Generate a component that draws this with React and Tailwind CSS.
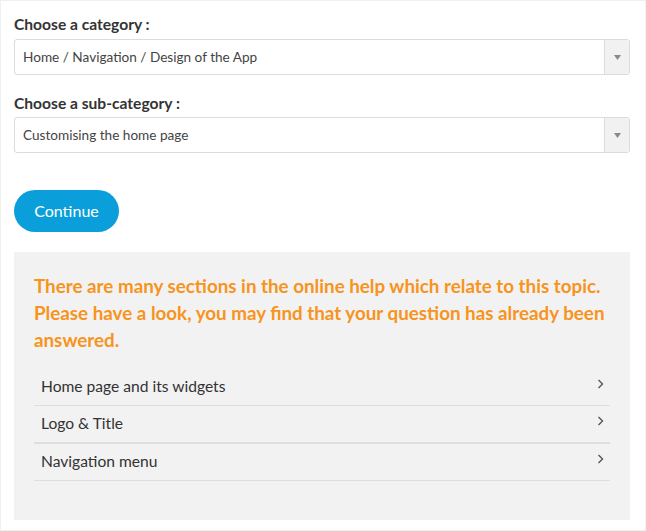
import React from "react";

const SelectBox = ({ value }) => {
  return (
    <div className="flex h-[36px] w-full items-stretch rounded-[3px] border border-[#dcdcdc] bg-white">
      <div className="flex flex-1 items-center pl-[8px] text-[13.6px] text-[#444]">{value}</div>
      <div className="flex w-[25px] items-center justify-center border-l border-[#dcdcdc] bg-[#f1f1f1] rounded-r-[3px]">
        <svg width="7" height="5" viewBox="0 0 7 5">
          <path d="M0 0 L7 0 L3.5 5 Z" fill="#8a8a8a" />
        </svg>
      </div>
    </div>
  );
};

const HelpLink = ({ text, thick, height }) => {
  return (
    <div
      className={
        "flex items-center justify-between pl-[7px] pr-[6px] border-[#dedede] " +
        height +
        (thick ? " border-b-2" : " border-b")
      }
    >
      <span className="text-[15.6px] text-[#333]">{text}</span>
      <svg width="7" height="10" viewBox="0 0 7 10" className="mb-[6px]">
        <path d="M1.5 1 L5.5 5 L1.5 9" fill="none" stroke="#555" strokeWidth="1.4" />
      </svg>
    </div>
  );
};

export default function App() {
  return (
    <div className="w-[646px] h-[531px] border border-[#edf1f1] bg-white pl-[13px] pr-[15px] pt-[13px] font-['Lato',sans-serif]">
      <div className="text-[15.6px] leading-[20px] font-bold text-[#333]">Choose a category :</div>
      <div className="mt-[5px]">
        <SelectBox value="Home / Navigation / Design of the App" />
      </div>
      <div className="mt-[18px] text-[15.6px] leading-[20px] font-bold text-[#333]">Choose a sub-category :</div>
      <div className="mt-[4px]">
        <SelectBox value="Customising the home page" />
      </div>
      <button className="mt-[37px] h-[42px] w-[105px] rounded-full bg-[#0a9fda] text-[16px] text-white">
        Continue
      </button>
      <div className="mt-[20px] h-[268px] bg-[#f2f2f2] px-[20px] pt-[20px]">
        <p className="mr-[-6px] text-[18.8px] leading-[27px] font-bold text-[#f7941d]">
          There are many sections in the online help which relate to this topic. Please have a look, you may find that your question has already been answered.
        </p>
        <div className="mt-[15px]">
          <HelpLink text="Home page and its widgets" height="h-[38px]" />
          <HelpLink text="Logo & Title" thick height="h-[38px]" />
          <HelpLink text="Navigation menu" height="h-[37px]" />
        </div>
      </div>
    </div>
  );
}
